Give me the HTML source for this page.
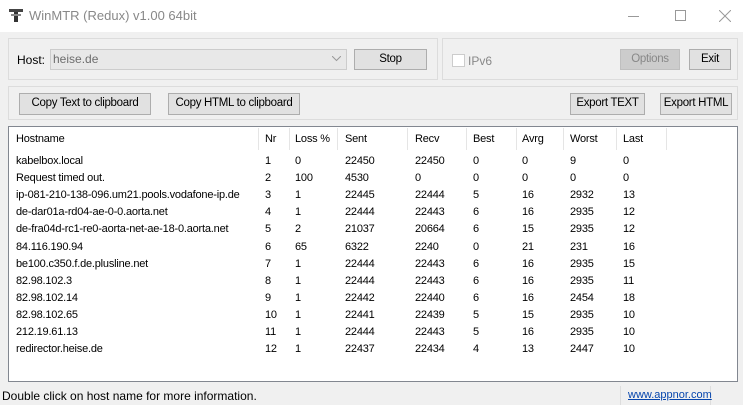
<!DOCTYPE html>
<html><head><meta charset="utf-8"><style>
*{box-sizing:border-box;margin:0;padding:0}
body{width:743px;height:405px;overflow:hidden;background:#f0f0f0;font-family:"Liberation Sans",sans-serif;font-size:11px;color:#000;position:relative}
.a{position:absolute}
.title{left:0;top:0;width:743px;height:32px;background:#fff}
.grp{border:1px solid #dcdcdc}
.btn{position:absolute;background:#e1e1e1;border:1px solid #adadad;text-align:center;font-size:11.5px;line-height:19px;letter-spacing:-0.3px}
.list{left:8px;top:126px;width:730px;height:256px;background:#fff;border:1px solid #828790}
.h,.c{position:absolute;white-space:nowrap;letter-spacing:-0.2px}
.sep{position:absolute;top:1px;width:1px;height:22px;background:#e5e5e5}
</style></head><body>
<div class="a title">
 <svg class="a" style="left:9px;top:9px" width="14" height="13"><rect x="0" y="0" width="14" height="3" fill="#444"/><rect x="5" y="3" width="4" height="10" fill="#333"/><rect x="2" y="5" width="10" height="2" fill="#888"/></svg>
 <div class="a" style="left:29px;top:8px;font-size:13px;color:#888">WinMTR (Redux) v1.00 64bit</div>
 <div class="a" style="left:628px;top:16px;width:11px;height:1px;background:#999"></div>
 <div class="a" style="left:675px;top:10px;width:11px;height:11px;border:1px solid #999"></div>
 <svg class="a" style="left:719px;top:10px" width="12" height="12"><path d="M0 0L12 12M12 0L0 12" stroke="#999" stroke-width="1"/></svg>
</div>
<div class="a grp" style="left:8px;top:38px;width:430px;height:42px"></div>
<div class="a grp" style="left:442px;top:38px;width:296px;height:42px"></div>
<div class="a" style="left:17px;top:53px;font-size:12px">Host:</div>
<div class="a" style="left:50px;top:49px;width:297px;height:21px;background:#e8e8e8;border:1px solid #ccc"></div>
<div class="a" style="left:53px;top:52px;font-size:12px;color:#6d6d6d">heise.de</div>
<svg class="a" style="left:332px;top:56px" width="9" height="6"><path d="M0 0L4.5 4.5L9 0" stroke="#999" fill="none"/></svg>
<div class="btn" style="left:354px;top:49px;width:73px;height:21px">Stop</div>
<div class="a" style="left:452px;top:54px;width:13px;height:13px;background:#fff;border:1px solid #ccc"></div>
<div class="a" style="left:468px;top:54px;font-size:12px;color:#888">IPv6</div>
<div class="btn" style="left:620px;top:49px;width:60px;height:21px;background:#ccc;border-color:#bfbfbf;color:#888">Options</div>
<div class="btn" style="left:689px;top:49px;width:42px;height:21px">Exit</div>
<div class="a grp" style="left:8px;top:86px;width:730px;height:34px"></div>
<div class="btn" style="left:19px;top:93px;width:132px;height:22px">Copy Text to clipboard</div>
<div class="btn" style="left:168px;top:93px;width:132px;height:22px">Copy HTML to clipboard</div>
<div class="btn" style="left:570px;top:93px;width:75px;height:22px">Export TEXT</div>
<div class="btn" style="left:660px;top:93px;width:72px;height:22px">Export HTML</div>
<div class="a list">
<div class="sep" style="left:249px"></div><div class="sep" style="left:280px"></div><div class="sep" style="left:328px"></div><div class="sep" style="left:398px"></div><div class="sep" style="left:457px"></div><div class="sep" style="left:507px"></div><div class="sep" style="left:554px"></div><div class="sep" style="left:607px"></div><div class="sep" style="left:657px"></div>
<div id="t"></div>
</div>
<div class="a" style="left:0;top:383px;width:743px;height:22px;background:#f0f0f0"></div>
<div class="a" style="left:2px;top:389px;font-size:12px">Double click on host name for more information.</div>
<div class="a" style="left:620px;top:386px;width:1px;height:19px;background:#ddd"></div>
<div class="a" style="left:710px;top:386px;width:1px;height:19px;background:#ddd"></div>
<div class="a" style="left:628px;top:389px;font-size:11px;color:#0645ad;text-decoration:underline">www.appnor.com</div>
<script>
var cols=[7,256,286,336,406,464,513,561,614];
var rows=[["Hostname","Nr","Loss %","Sent","Recv","Best","Avrg","Worst","Last"],
["kabelbox.local",1,0,22450,22450,0,0,9,0],
["Request timed out.",2,100,4530,0,0,0,0,0],
["ip-081-210-138-096.um21.pools.vodafone-ip.de",3,1,22445,22444,5,16,2932,13],
["de-dar01a-rd04-ae-0-0.aorta.net",4,1,22444,22443,6,16,2935,12],
["de-fra04d-rc1-re0-aorta-net-ae-18-0.aorta.net",5,2,21037,20664,6,15,2935,12],
["84.116.190.94",6,65,6322,2240,0,21,231,16],
["be100.c350.f.de.plusline.net",7,1,22444,22443,6,16,2935,15],
["82.98.102.3",8,1,22444,22443,6,16,2935,11],
["82.98.102.14",9,1,22442,22440,6,16,2454,18],
["82.98.102.65",10,1,22441,22439,5,15,2935,10],
["212.19.61.13",11,1,22444,22443,5,16,2935,10],
["redirector.heise.de",12,1,22437,22434,4,13,2447,10]];
var h="";
rows.forEach(function(r,i){var y=i==0?6:28+(i-1)*17.1;r.forEach(function(v,j){h+='<div class="c" style="left:'+cols[j]+'px;top:'+y+'px">'+v+'</div>';});});
document.getElementById("t").innerHTML=h;
</script>
</body></html>
